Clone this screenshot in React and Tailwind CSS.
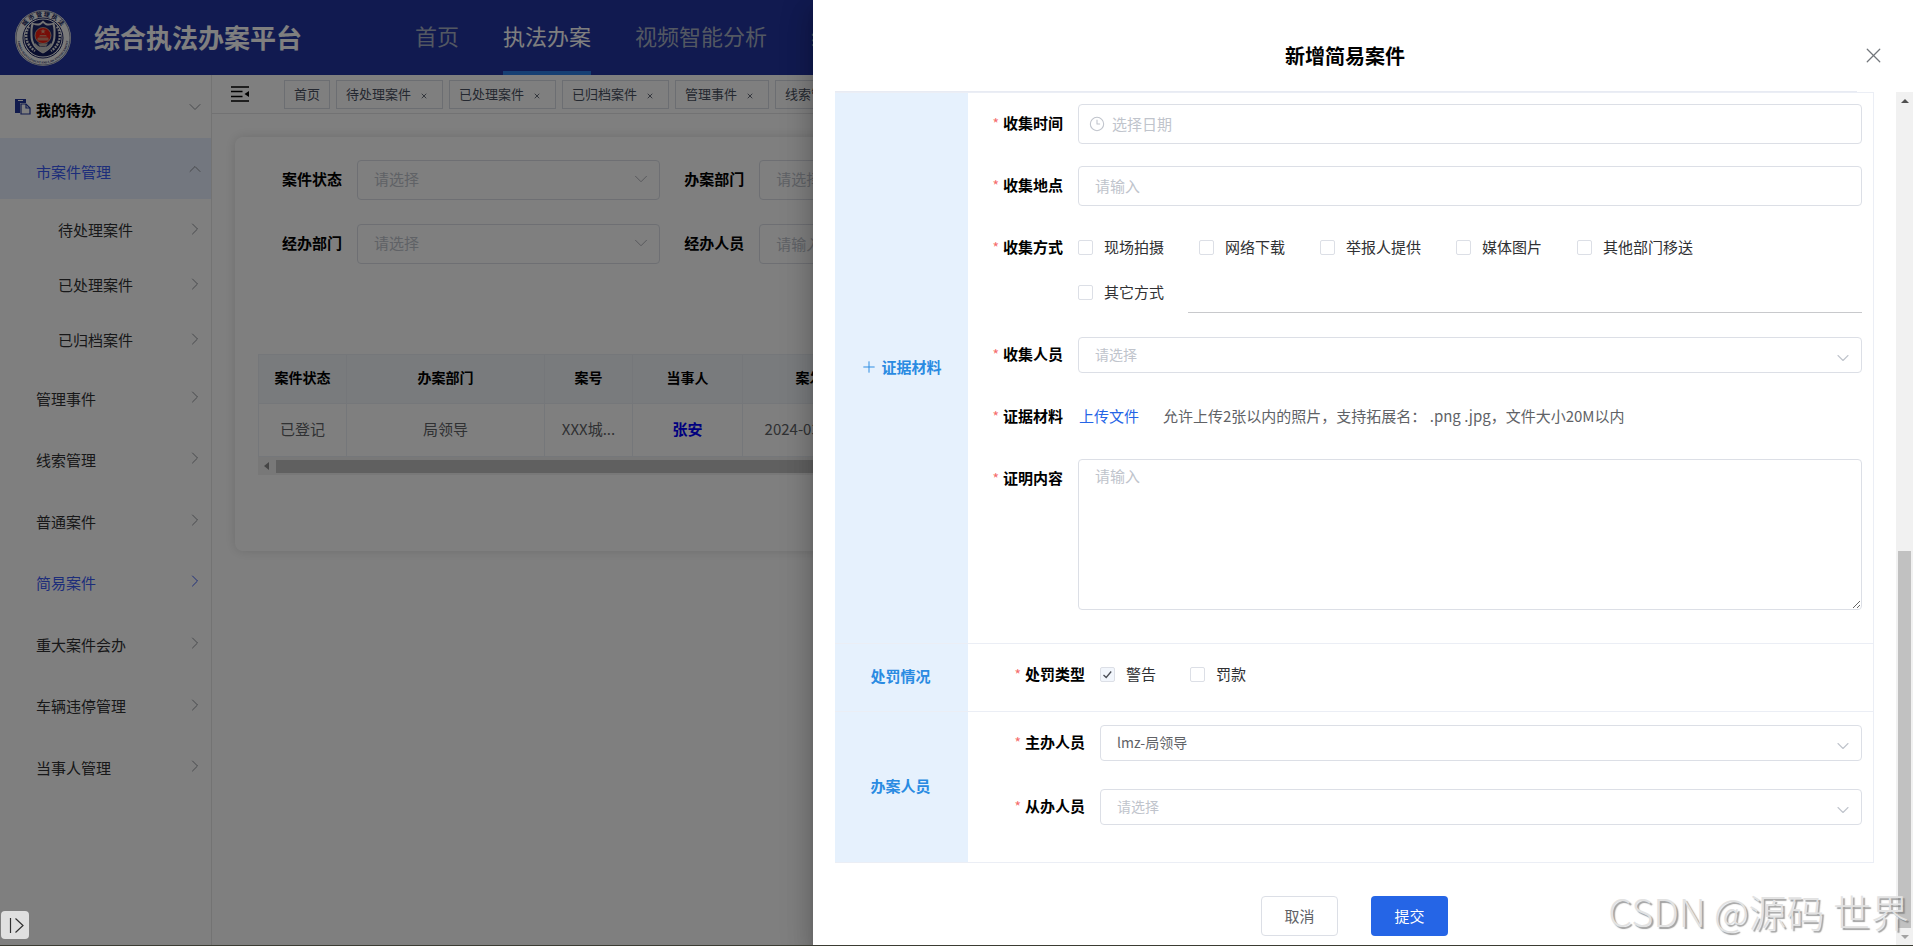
import React, { useState } from 'react';
import { ChevronDown, ChevronRight, ChevronUp, Clock3, Plus, X } from 'lucide-react';

const navItems = ['首页', '执法办案', '视频智能分析', '统计分析'];

const tabs = [
  { name: '首页', closable: false },
  { name: '待处理案件', closable: true },
  { name: '已处理案件', closable: true },
  { name: '已归档案件', closable: true },
  { name: '管理事件', closable: true },
  { name: '线索管理', closable: true },
];

const caseMenu = ['待处理案件', '已处理案件', '已归档案件'];

const mainMenu = ['管理事件', '线索管理', '普通案件', '简易案件', '重大案件会办', '车辆违停管理', '当事人管理'];

const collectWays = ['现场拍摄', '网络下载', '举报人提供', '媒体图片', '其他部门移送'];

const Logo = () => (
  <svg viewBox="0 0 56 56" className="w-14 h-14 shrink-0" aria-label="城市管理执法">
    <defs>
      <path id="ring-top" d="M6.500 28a21.500 21.500 0 0 1 43 0" />
      <path id="ring-bottom" d="M2.500 28a25.500 25.500 0 1 0 51 0" />
    </defs>
    <circle cx="28" cy="28" r="28" fill="#f4f4f4" />
    <circle cx="28" cy="28" r="27" fill="none" stroke="#3a4368" strokeWidth="0.6" />
    <circle cx="28" cy="28" r="20" fill="#fff" stroke="#131c5c" strokeWidth="1" />
    <circle cx="28" cy="28" r="18.6" fill="#131c5c" />
    <text fontSize="6" fontWeight="700" fill="#131c5c">
      <textPath href="#ring-top" startOffset="50%" textAnchor="middle">城 市 管 理 执 法</textPath>
    </text>
    <text fontSize="3" fontWeight="700" fill="#131c5c" fontFamily="Liberation Serif">
      <textPath href="#ring-bottom" startOffset="50%" textAnchor="middle">URBAN MANAGEMENT AND LAW ENFORCEMENT</textPath>
    </text>
    {/* wheat ears */}
    <g fill="none" stroke="#e4e4e4" strokeWidth="2.4" strokeDasharray="2 1">
      <path d="M14 16.5c-5 8-3.500 18 6 24.500" />
      <path d="M42 16.500c5 8 3.500 18-6 24.500" />
    </g>
    <path d="M28 10.500l3 2.500c3 1 5.500.500 8-.500 2 4 1.500 8 1.500 13 0 9-5 14-12.500 18-7.500-4-12.500-9-12.500-18 0-5-.500-9 1.500-13 2.500 1 5 1.500 8 .500z" fill="#e8e8e8" />
    <path d="M28 13l2.500 2c2.500 1 5 .500 7-.500 1.200 3.500 1 7 1 10.500 0 8-4 13-10.500 16.500-6.500-3.500-10.500-8.500-10.500-16.500 0-3.500-.200-7 1-10.500 2 1 4.500 1.500 7 .500z" fill="#1d2668" />
    <path d="M20.500 33c2 3.500 4.500 4 7.500 4s5.500-.500 7.500-4l1 2.500c-2 3-4.500 5.500-8.500 7.500-4-2-6.500-4.500-8.500-7.500z" fill="#c9c9c9" />
    <circle cx="28" cy="25.500" r="8" fill="#ee1c10" stroke="#c8b79a" strokeWidth="0.800" />
    <path d="M28 18.500l.7 2h2l-1.600 1.200.6 2-1.700-1.200-1.700 1.200.6-2-1.600-1.200h2z" fill="#e9a080" />
    <path d="M22.500 30.500v-2.500l1-.500h9l1 .500v2.500zM24 26.500h8l-1-1.500h-6z" fill="#d88a70" />
    <path d="M23 33.500h10l-2 3h-6z" fill="#b9aaa0" />
  </svg>
);

const TodoIcon = () => (
  <svg viewBox="0 0 16 16" className="w-4 h-4">
    <path d="M0 0h11v4H7.500L5 4v10H0z" fill="#22379a" />
    <path d="M6 5h5l4 4v6H6z" fill="#fff" stroke="#22379a" strokeWidth="1.200" />
    <path d="M11 5v4h4" fill="none" stroke="#22379a" strokeWidth="1.200" />
    <path d="M3 1.500h5" stroke="#fff" strokeWidth="1" />
  </svg>
);

const FoldIcon = () => (
  <svg viewBox="0 0 18 16" className="w-[18px] h-4">
    <path d="M0 1h18M0 5.500h11.500M0 10.500h11.500M0 15h18" stroke="#000" strokeWidth="1.500" />
    <path d="M18 5v6l-4.500-3z" fill="#000" />
  </svg>
);

const FilterField = ({ id, label, type = 'select' }) => (
  <div className="flex items-center">
    <label htmlFor={id} className="w-[99px] shrink-0 pr-[15px] pb-0.5 text-right text-[15px] font-bold text-black">
      {label}
    </label>
    {type === 'select' ? (
      <div className="relative flex-1">
        <select id={id} className="w-full h-10 appearance-none rounded border border-[#dcdfe6] bg-white pb-0.5 pl-4 text-[15px] text-[#c0c4cc]">
          <option>请选择</option>
        </select>
        <ChevronDown size={22} strokeWidth={1} className="absolute right-2 top-2 text-[#a8abb2] pointer-events-none" />
      </div>
    ) : (
      <input
        id={id}
        placeholder="请输入"
        className="flex-1 min-w-0 h-10 rounded border border-[#dcdfe6] bg-white px-4 pb-0.5 text-[15px] placeholder:text-[#c0c4cc]"
      />
    )}
  </div>
);

const Header = () => (
  <header className="flex h-[75px] shrink-0 items-center bg-[#2234a0] pl-[15px]">
    <Logo />
    <h1 className="ml-[23px] w-[298px] shrink-0 pb-0.5 text-[26px] font-bold text-white">综合执法办案平台</h1>
    <nav className="ml-[23px] flex h-full gap-11 text-[22px] whitespace-nowrap">
      {navItems.map((item) => (
        <a
          key={item}
          href="#"
          className={
            item === '执法办案'
              ? 'flex items-center border-b-4 border-[#2f80e8] text-white'
              : 'flex items-center border-b-4 border-transparent text-[#a6b0c4]'
          }
        >
          {item}
        </a>
      ))}
    </nav>
  </header>
);

const Sidebar = () => (
  <aside className="w-[212px] shrink-0 border-r border-[#e6e6e6] bg-white text-[15px] text-[#303133]">
    <a href="#" className="flex h-[63px] items-center pl-[15px] pr-[9px]">
      <TodoIcon />
      <span className="ml-[5px] flex-1 pt-2 font-bold text-black">我的待办</span>
      <ChevronDown size={20} strokeWidth={1.2} className="-mr-[3px] text-[#909399]" />
    </a>
    <a href="#" className="flex h-[61px] items-center bg-[#e6eefe] pl-9 pr-[9px] text-[#3b5bf5]">
      <span className="flex-1 pt-2">市案件管理</span>
      <ChevronUp size={20} strokeWidth={1.2} className="-mr-[3px] text-[#909399]" />
    </a>
    <ul className="pt-0.5">
      {caseMenu.map((item) => (
        <li key={item}>
          <a href="#" className="flex h-[55px] items-center pl-[58px] pr-[9px]">
            <span className="flex-1 pt-1">{item}</span>
            <ChevronRight size={20} strokeWidth={1.2} className="-mr-[3px] text-[#909399]" />
          </a>
        </li>
      ))}
    </ul>
    <ul className="grid h-[431px] grid-rows-7">
      {mainMenu.map((item) => (
        <li key={item} className={item === '简易案件' ? 'text-[#3b5bf5]' : ''}>
          <a href="#" className="flex h-full items-center pl-9 pr-[9px]">
            <span className="flex-1 pt-1">{item}</span>
            <ChevronRight
              size={20}
              strokeWidth={1.2}
              className={item === '简易案件' ? '-mr-[3px] text-[#3b5bf5]' : '-mr-[3px] text-[#909399]'}
            />
          </a>
        </li>
      ))}
    </ul>
  </aside>
);

const TabBar = () => (
  <div className="flex h-[39px] items-center border-b border-[#e4e4e6] bg-white pl-[19px]">
    <button type="button" aria-label="收起菜单" className="mr-[35px]">
      <FoldIcon />
    </button>
    <div className="flex gap-1.5 whitespace-nowrap text-[13px] text-[#495060]">
      {tabs.map((tab) => (
        <div key={tab.name} className="flex h-[29px] items-center border border-[#d8dce5] px-[9px]">
          <a href="#">{tab.name}</a>
          {tab.closable && (
            <button type="button" aria-label={`关闭${tab.name}`} className="ml-[9px] mr-[5px] pt-1">
              <X size={8} strokeWidth={2.5} />
            </button>
          )}
        </div>
      ))}
    </div>
  </div>
);

const CaseTable = () => (
  <div className="mt-[90px] overflow-hidden">
    <table className="w-full min-w-[1609px] table-fixed border-collapse border border-[#ebeef5] text-center text-[15px] text-[#606266]">
      <colgroup>
        <col className="w-[88px]" />
        <col className="w-[198px]" />
        <col className="w-[88px]" />
        <col className="w-[110px]" />
        <col className="w-[162px]" />
        <col />
      </colgroup>
      <thead className="bg-[#f2f6fa] text-sm text-black">
        <tr className="h-[49px]">
          {['案件状态', '办案部门', '案号', '当事人', '案发时间', ''].map((name) => (
            <th key={name} className="border border-[#ebeef5] pb-1 font-bold">{name}</th>
          ))}
        </tr>
      </thead>
      <tbody>
        <tr className="h-[53px]">
          <td className="border border-[#ebeef5] pb-0.5">已登记</td>
          <td className="border border-[#ebeef5] pb-0.5">局领导</td>
          <td className="border border-[#ebeef5] pb-0.5">XXX城...</td>
          <td className="border border-[#ebeef5] pb-0.5 font-bold text-[#0000ff]">张安</td>
          <td className="border border-[#ebeef5] pb-0.5 whitespace-nowrap">2024-03-18 10:20</td>
          <td className="border border-[#ebeef5]" />
        </tr>
      </tbody>
    </table>
    <div className="flex h-[18px] items-center bg-[#f1f1f1] pl-[6px]">
      <svg viewBox="0 0 5 8" className="w-[5px] h-2">
        <path d="M5 0v8L0 4z" fill="#8a8a8a" />
      </svg>
      <div className="ml-[7px] h-[13px] w-3/5 bg-[#c1c1c1]" />
    </div>
  </div>
);

const CasePage = () => (
  <main className="min-w-0 flex-1">
    <TabBar />
    <section className="mx-[23px] mt-[23px] h-[414px] rounded-lg bg-white px-[23px] pt-[23px] shadow-[0_0_12px_rgba(0,0,0,0.14)]">
      <form className="grid grid-cols-4 gap-y-6">
        <FilterField id="case-status" label="案件状态" />
        <FilterField id="case-dept" label="办案部门" />
        <FilterField id="case-no" label="案号" type="text" />
        <FilterField id="case-party" label="当事人" type="text" />
        <FilterField id="handle-dept" label="经办部门" />
        <FilterField id="handle-user" label="经办人员" type="text" />
      </form>
      <CaseTable />
    </section>
  </main>
);

const Section = ({ title, icon, children }) => (
  <div className="flex border-b border-[#ebeef5]">
    <div className="flex w-[133px] shrink-0 items-center justify-center bg-[#e6f1fd] pr-0.5 pb-0.5 text-[15px] font-bold text-[#2a8be2]">
      {icon}
      {title}
    </div>
    <div className="min-w-0 flex-1 pr-[11px] pt-[11px]">{children}</div>
  </div>
);

const FormItem = ({ id, label, wide, children }) => (
  <div className="flex items-start">
    <label
      htmlFor={id}
      className={
        wide
          ? 'h-10 w-[132px] shrink-0 pr-[15px] text-right text-[15px] leading-[38px] font-bold text-black'
          : 'h-10 w-[110px] shrink-0 pr-[15px] text-right text-[15px] leading-[38px] font-bold text-black'
      }
    >
      <span className="mr-1 text-sm font-normal text-[#f56c6c]">*</span>
      {label}
    </label>
    <div className="min-w-0 flex-1">{children}</div>
  </div>
);

const DrawerSelect = ({ id, value, options }) => (
  <div className="relative flex h-10 items-center">
    <select
      id={id}
      defaultValue={value}
      className={
        value
          ? 'h-9 w-full appearance-none rounded border border-[#dcdfe6] bg-white pl-4 pb-0.5 text-sm text-[#606266]'
          : 'h-9 w-full appearance-none rounded border border-[#dcdfe6] bg-white pl-4 pb-0.5 text-sm text-[#c0c4cc]'
      }
    >
      {options.map((option) => (
        <option key={option}>{option}</option>
      ))}
    </select>
    <ChevronDown size={20} strokeWidth={1.3} className="absolute right-[9px] top-[13px] text-[#c0c4cc] pointer-events-none" />
  </div>
);

const Checkbox = ({ label, checked, onChange }) => (
  <label className="flex h-10 items-center gap-[11px] pb-0.5 text-[15px] text-[#303133]">
    <span className="grid">
      <input
        type="checkbox"
        checked={checked}
        onChange={onChange}
        className="col-start-1 row-start-1 h-[15px] w-[15px] appearance-none rounded-xs border border-[#dcdfe6] bg-white checked:bg-[#f2f6fc]"
      />
      {checked && (
        <svg viewBox="0 0 15 15" className="pointer-events-none col-start-1 row-start-1 h-[15px] w-[15px]">
          <path d="M3.500 8l2.700 2.500 5-6" fill="none" stroke="#4a4d55" strokeWidth="1.300" />
        </svg>
      )}
    </span>
    {label}
  </label>
);

const CaseDrawer = () => {
  const [ways, setWays] = useState([]);
  const [penalty, setPenalty] = useState(['警告']);

  const toggle = (list, setList, item) => {
    setList(list.includes(item) ? list.filter((i) => i !== item) : [...list, item]);
  };

  return (
    <div
      role="dialog"
      aria-label="新增简易案件"
      className="flex h-full w-[57.5%] flex-col bg-white shadow-[0_8px_10px_-5px_rgba(0,0,0,0.2),0_16px_24px_2px_rgba(0,0,0,0.14),0_6px_30px_5px_rgba(0,0,0,0.12)]"
    >
      <div className="flex h-[91px] shrink-0 items-center pr-[27px] pt-5">
        <h2 className="flex-1 pl-4 text-center text-xl font-bold text-black">新增简易案件</h2>
        <button type="button" aria-label="关闭" className="text-[#72767b]">
          <X size={25} strokeWidth={1.2} />
        </button>
      </div>
      <div className="ml-[22px] mr-14 h-px shrink-0 bg-[#e8ebf3]" />

      <div className="flex min-h-0 flex-1">
        <div className="min-w-0 flex-1 px-[22px]">
          <div className="border-r border-t border-[#ebeef5]">
            <Section title="证据材料" icon={<Plus size={18} strokeWidth={1.3} className="mr-1" />}>
              <div className="flex flex-col gap-[22px] pb-[33px]">
                <FormItem id="collect-time" label="收集时间">
                  <div className="relative">
                    <input
                      id="collect-time"
                      placeholder="选择日期"
                      className="h-10 w-full rounded border border-[#dcdfe6] pl-[33px] pb-0.5 text-[15px] placeholder:text-[#c0c4cc]"
                    />
                    <Clock3 size={16} strokeWidth={1.6} className="absolute left-[11px] top-3 text-[#c0c4cc]" />
                  </div>
                </FormItem>
                <FormItem id="collect-place" label="收集地点">
                  <input
                    id="collect-place"
                    placeholder="请输入"
                    className="h-10 w-full rounded border border-[#dcdfe6] px-4 pb-0.5 text-[15px] placeholder:text-[#c0c4cc]"
                  />
                </FormItem>
                <FormItem label="收集方式">
                  <div className="flex gap-[35px]">
                    {collectWays.map((way) => (
                      <Checkbox key={way} label={way} checked={ways.includes(way)} onChange={() => toggle(ways, setWays, way)} />
                    ))}
                  </div>
                  <div className="mt-[5px] flex gap-6">
                    <Checkbox label="其它方式" checked={ways.includes('其它方式')} onChange={() => toggle(ways, setWays, '其它方式')} />
                    <input aria-label="其它方式说明" className="h-10 min-w-0 flex-1 border-b border-[#c8c9cc] text-[15px]" />
                  </div>
                </FormItem>
                <FormItem id="collect-user" label="收集人员">
                  <DrawerSelect id="collect-user" options={['请选择']} />
                </FormItem>
                <FormItem label="证据材料">
                  <div className="flex h-10 items-center gap-6 pb-0.5 pl-px text-[15px]">
                    <a href="#" className="text-[#2565e6]">上传文件</a>
                    <span className="whitespace-pre text-[#606266]">允许上传2张以内的照片，支持拓展名： .png .jpg，文件大小20M以内</span>
                  </div>
                </FormItem>
                <FormItem id="prove-content" label="证明内容">
                  <textarea
                    id="prove-content"
                    placeholder="请输入"
                    className="block h-[151px] w-full resize rounded border border-[#dcdfe6] px-4 py-[5px] text-[15px] placeholder:text-[#c0c4cc]"
                  />
                </FormItem>
              </div>
            </Section>

            <Section title="处罚情况">
              <div className="pb-4">
                <FormItem label="处罚类型" wide>
                  <div className="flex gap-[34px]">
                    {['警告', '罚款'].map((item) => (
                      <Checkbox key={item} label={item} checked={penalty.includes(item)} onChange={() => toggle(penalty, setPenalty, item)} />
                    ))}
                  </div>
                </FormItem>
              </div>
            </Section>

            <Section title="办案人员">
              <div className="flex flex-col gap-6 pb-[35px]">
                <FormItem id="main-user" label="主办人员" wide>
                  <DrawerSelect id="main-user" value="lmz-局领导" options={['lmz-局领导']} />
                </FormItem>
                <FormItem id="sub-user" label="从办人员" wide>
                  <DrawerSelect id="sub-user" options={['请选择']} />
                </FormItem>
              </div>
            </Section>
          </div>

          <div className="mt-[33px] flex justify-center gap-[33px] text-[15px]">
            <button type="button" className="h-10 w-[77px] rounded border border-[#dcdfe6] bg-white text-[#606266]">取消</button>
            <button type="button" className="h-10 w-[77px] rounded bg-[#2565e6] text-white">提交</button>
          </div>
        </div>

        {/* scrollbar */}
        <div className="flex w-[17px] shrink-0 flex-col items-center bg-[#f1f1f1]">
          <div className="flex h-[17px] shrink-0 items-center">
            <svg viewBox="0 0 8 4" className="h-1 w-2">
              <path d="M0 4h8L4 0z" fill="#505050" />
            </svg>
          </div>
          <div className="flex w-full min-h-0 flex-1 flex-col justify-end px-0.5">
            <div className="h-[46%] bg-[#c1c1c1]" />
          </div>
          <div className="flex h-[17px] shrink-0 items-center">
            <svg viewBox="0 0 8 4" className="h-1 w-2">
              <path d="M0 0h8L4 4z" fill="#a3a3a3" />
            </svg>
          </div>
        </div>
      </div>
    </div>
  );
};

const App = () => {
  return (
    <div className="relative flex h-screen flex-col overflow-hidden border-b border-[#3b3c33] bg-white font-['Noto_Sans_CJK_SC',sans-serif]">
      <Header />
      <div className="flex min-h-0 flex-1">
        <Sidebar />
        <CasePage />
      </div>

      <div className="absolute inset-0 flex justify-end bg-black/50">
        <CaseDrawer />
      </div>

      <button
        type="button"
        aria-label="展开"
        className="absolute bottom-[6px] left-px flex h-7 w-7 items-center justify-center rounded-sm bg-[#e0e0e0]"
      >
        <svg viewBox="0 0 28 28" className="h-7 w-7" fill="none" stroke="#303030" strokeWidth="1.200">
          <path d="M9.500 7v15M14.500 7.500l7.500 7-7.500 7" />
        </svg>
      </button>

      <div className="pointer-events-none absolute bottom-0 right-1 whitespace-nowrap text-[38px] leading-[68px] font-light text-[#e2e2e2] [text-shadow:2px_2px_1px_rgba(120,120,120,0.7)]">
        CSDN @源码 世界
      </div>
    </div>
  );
};

export default App;
